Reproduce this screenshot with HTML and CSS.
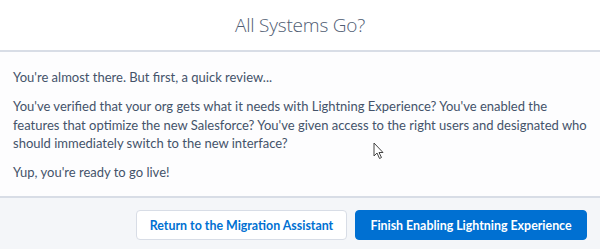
FILE: index.html
```html
<!DOCTYPE html>
<html lang="en">
<head>
    <meta charset="utf-8">
    <link rel="stylesheet" href="styles.css">
</head>
<body>
    <div class="modal">
        <div class="modal-header">
            <h2 class="title">All Systems Go?</h2>
        </div>
        <div class="modal-body">
            <p>You're almost there. But first, a quick review...</p>
            <p>You've verified that your org gets what it needs with Lightning Experience? You've enabled the features that optimize the new Salesforce? You've given access to the right users and designated who should immediately switch to the new interface?</p>
            <p>Yup, you're ready to go live!</p>
            <!-- mouse pointer caught in the screenshot -->
            <svg class="cursor" width="12" height="18" viewBox="0 0 12 18">
                <path d="M1 1 L1 14 L4 11 L6.5 16.5 L8.5 15.5 L6 10.5 L10 10.5 Z" fill="#fff" stroke="#444" stroke-width="1" stroke-linejoin="round"/>
            </svg>
        </div>
        <div class="modal-footer">
            <button class="btn btn-neutral">Return to the Migration Assistant</button>
            <button class="btn btn-brand">Finish Enabling Lightning Experience</button>
        </div>
    </div>
</body>
</html>
```

FILE: styles.css
```css
html, body {
    margin: 0;
    padding: 0;
}

body {
    font-family: Lato, "Liberation Sans", sans-serif;
    color: #44536a;
    background: #fdfdfe;
}

.modal {
    width: 600px;
    height: 249px;
    display: flex;
    flex-direction: column;
}

.modal-header {
    height: 50px;
    background: #fff;
    border-bottom: 2px solid #d8dde6;
    display: flex;
    align-items: center;
    justify-content: center;
}

.title {
    margin: 0;
    font-family: "Open Sans", sans-serif;
    font-weight: 300;
    font-size: 19px;
    color: #4f5d73;
    letter-spacing: -0.2px;
}

.modal-body {
    position: relative;
    flex: 1;
    padding: 16px 13px 0 13px;
    background: #fdfdfe;
    border-bottom: 2px solid #d8dde6;
    font-size: 13px;
    line-height: 18.3px;
}

.modal-body p {
    margin: 0 0 11px 0;
}

.cursor {
    position: absolute;
    left: 373px;
    top: 90px;
}

.modal-footer {
    height: 51px;
    box-sizing: border-box;
    background: #f4f6f9;
    display: flex;
    justify-content: flex-end;
    align-items: flex-start;
    gap: 8px;
    padding: 12px 13px 0 0;
}

.btn {
    height: 30px;
    border-radius: 4px;
    font-family: Lato, sans-serif;
    font-size: 12.4px;
    font-weight: 700;
    padding: 0;
    white-space: nowrap;
    border: 1px solid #d8dde6;
}

.btn-neutral {
    width: 211px;
    background: #fff;
    color: #0070d2;
}

.btn-brand {
    width: 232px;
    background: #0070d2;
    border-color: #0070d2;
    color: #fff;
}
```
